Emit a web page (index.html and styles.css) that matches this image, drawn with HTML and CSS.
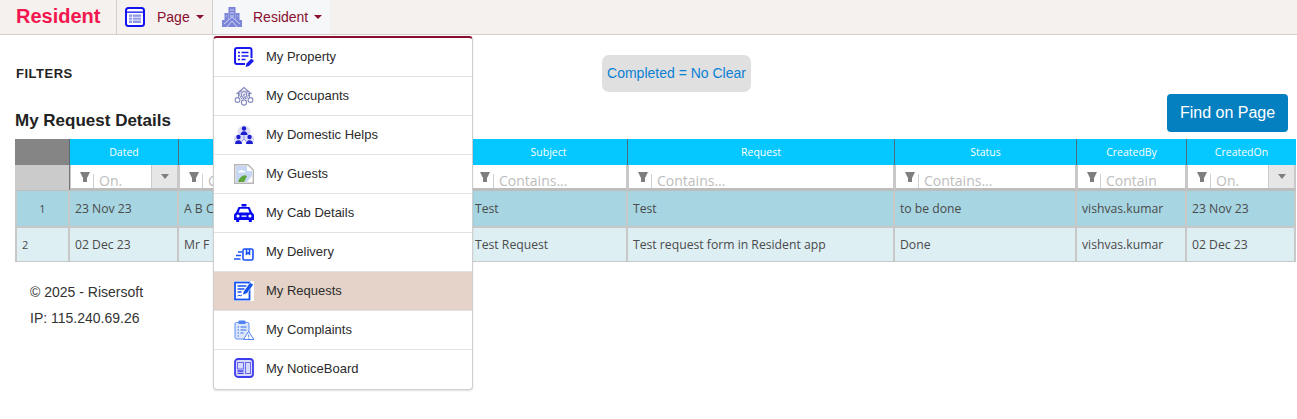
FILE: index.html
```html
<!DOCTYPE html>
<html lang="en">
<head>
<meta charset="utf-8">
<title>My Request Details</title>
<link rel="stylesheet" href="styles.css">
</head>
<body>
<header class="topbar">
  <a class="brand">Resident</a>
  <nav class="nav">
    <div class="nav-item nav-page">
      <svg class="nav-icon" viewBox="0 0 20 20"><rect x="1" y="1" width="18" height="18" rx="2.500" fill="#fff" stroke="#1212f2" stroke-width="2"/><rect x="2" y="4.500" width="16" height="1.300" fill="#1212f2"/><rect x="4" y="7.500" width="12" height="8.500" fill="#8f9ae6"/><path d="M7.500 7.500v8.500M4 10.300h12M4 13.100h12" stroke="#fff" stroke-width=".8"/></svg>
      <span class="nav-label">Page</span><i class="caret"></i>
    </div>
    <div class="nav-item nav-resident">
      <svg class="nav-icon" viewBox="0 0 20 20"><g fill="#7c86d8"><rect x="6.500" y="0" width="7" height="20"/><rect x="2.500" y="6" width="4" height="14"/><rect x="13.500" y="6" width="4" height="14"/><rect x="0" y="13" width="20" height="7"/></g><path d="M8 3h4M8 6h4M8 9h4M4 9h1M15 9h1M2 17l8-7 8 7M5 20l5-6 5 6" stroke="#e8eaf8" fill="none" stroke-width=".8"/></svg>
      <span class="nav-label">Resident</span><i class="caret"></i>
    </div>
  </nav>
</header>

<main class="content">
  <section class="filters">
    <h4 class="filters-title">FILTERS</h4>
    <div class="legend">Completed = No Clear</div>
  </section>
  <section class="title-row">
    <h3 class="page-title">My Request Details</h3>
    <button class="find-btn" type="button">Find on Page</button>
  </section>

  <div class="grid">
    <div class="hd corner"></div>
    <div class="hd">Dated</div>
    <div class="hd"></div>
    <div class="hd">Subject</div>
    <div class="hd">Request</div>
    <div class="hd">Status</div>
    <div class="hd">CreatedBy</div>
    <div class="hd">CreatedOn</div>

    <div class="fl corner2"></div>
    <div class="fl"><i class="funnel"></i><span class="ph">On.</span><span class="drop"><i></i></span></div>
    <div class="fl"><i class="funnel"></i><span class="ph">Contains...</span></div>
    <div class="fl"><i class="funnel"></i><span class="ph">Contains...</span></div>
    <div class="fl"><i class="funnel"></i><span class="ph">Contains...</span></div>
    <div class="fl"><i class="funnel"></i><span class="ph">Contains...</span></div>
    <div class="fl"><i class="funnel"></i><span class="ph clip">Contains...</span></div>
    <div class="fl"><i class="funnel"></i><span class="ph">On.</span><span class="drop"><i></i></span></div>

    <div class="c r1 num center">1</div>
    <div class="c r1">23 Nov 23</div>
    <div class="c r1">A B C</div>
    <div class="c r1">Test</div>
    <div class="c r1">Test</div>
    <div class="c r1">to be done</div>
    <div class="c r1">vishvas.kumar</div>
    <div class="c r1">23 Nov 23</div>

    <div class="c r2 num">2</div>
    <div class="c r2">02 Dec 23</div>
    <div class="c r2">Mr F</div>
    <div class="c r2">Test Request</div>
    <div class="c r2">Test request form in Resident app</div>
    <div class="c r2">Done</div>
    <div class="c r2">vishvas.kumar</div>
    <div class="c r2">02 Dec 23</div>
  </div>

  <footer class="foot">
    <p>© 2025 - Risersoft</p>
    <p>IP: 115.240.69.26</p>
  </footer>
</main>

<ul class="menu">
  <li class="mi"><svg class="mi-icon" viewBox="0 0 20 20"><path d="M17.500 11V3a2 2 0 0 0-2-2H3a2 2 0 0 0-2 2v12a2 2 0 0 0 2 2h8" fill="none" stroke="#1a1af0" stroke-width="2"/><path d="M4 5.500h2M7.500 5.500h7M4 9h2M7.500 9h7M4 12.500h2M7.500 12.500h4" stroke="#1a1af0" stroke-width="1.700"/><path d="M11.500 20l1-3.500 5-5 2.500 2.500-5 5z" fill="#1a1af0"/></svg>My Property</li>
  <li class="mi"><svg class="mi-icon" viewBox="0 0 20 20" fill="none" stroke="#8487bd" stroke-width="1.100"><path d="M2.500 8l7.500-6.500L17.500 8M4.500 7v4M15.500 7v4"/><path d="M7 5h6l2 3.500-2.500 4h-5L5 8.500z" stroke-dasharray="1.500 .6"/><circle cx="10" cy="8.500" r="2.800"/><path d="M8.800 8.500l1 1 1.600-1.800"/><circle cx="3.500" cy="14" r="2.400"/><circle cx="16.500" cy="14" r="2.400"/><circle cx="10" cy="16.500" r="2.600"/></svg>My Occupants</li>
  <li class="mi"><svg class="mi-icon" viewBox="0 0 20 20"><circle cx="10" cy="7" r="6.500" fill="#dcdcfa"/><circle cx="4.500" cy="14.500" r="5" fill="#dcdcfa"/><circle cx="15.500" cy="14.500" r="5" fill="#dcdcfa"/><g fill="#1c1ccf"><circle cx="10" cy="3.500" r="2.200"/><path d="M6.500 10c0-5 7-5 7 0z"/><circle cx="4.500" cy="12" r="2.200"/><path d="M1 19c0-5 7-5 7 0z"/><circle cx="15.500" cy="12" r="2.200"/><path d="M12 19c0-5 7-5 7 0z"/></g><path d="M10 10v4M8 16l2-2 2 2" fill="none" stroke="#7a7ae0" stroke-width=".8"/></svg>My Domestic Helps</li>
  <li class="mi"><svg class="mi-icon" viewBox="0 0 20 20"><path d="M.7.700h13.300l5.300 5.300v13.300H.7z" fill="#fff" stroke="#b5b5b5" stroke-width="1.400"/><path d="M2 2h11v5h5v11H2z" fill="#c6d7f3"/><path d="M4 18c2-6 6-8 9-6l-3 6z" fill="#5fa53a"/><path d="M6 6.500c1.500-1 3-.5 4 .5 1.500 0 2 1.500.5 1.500h-6c-.5-1 .5-2 1.500-2z" fill="#fff"/><path d="M13 18l5-6v6z" fill="#fff"/></svg>My Guests</li>
  <li class="mi"><svg class="mi-icon" viewBox="0 0 20 20" fill="#0808ee"><rect x="7.500" y="1" width="5" height="2.500"/><path d="M4.500 4h11L18 9.500c1 .5 2 1.500 2 3V17h-2.200v2h-3v-2H5.200v2h-3v-2H0v-4.500c0-1.500 1-2.500 2-3zM6 5.800 4.500 9.500h11L14 5.800z" fill-rule="evenodd"/><circle cx="4" cy="13" r="1.600" fill="#fff"/><circle cx="16" cy="13" r="1.600" fill="#fff"/><rect x="7.500" y="12.500" width="5" height="1.300" fill="#fff"/></svg>My Cab Details</li>
  <li class="mi"><svg class="mi-icon" viewBox="0 0 20 20" fill="none" stroke="#1a52f5" stroke-width="1.600"><rect x="9" y="7" width="10" height="11" rx="1.500"/><path d="M12.500 7v5l1.500-1 1.500 1V7M4 10h4M2 13.500h5M0 17h6.500"/></svg>My Delivery</li>
  <li class="mi active"><svg class="mi-icon" viewBox="0 0 20 20"><rect width="20" height="20" fill="#fff"/><rect x="1" y="1.500" width="14.500" height="17" fill="#fff" stroke="#1552f0" stroke-width="1.800"/><path d="M3.500 5h9M3.500 8h7M3.500 11h4" stroke="#1552f0" stroke-width="1.600"/><path d="M3.500 15l1.500-1 1 1 2-1" stroke="#1552f0" fill="none"/><path d="M8.500 14l1-3.500 6.500-9 3.500 2-6.500 9z" fill="#1552f0" stroke="#fff" stroke-width=".6"/></svg>My Requests</li>
  <li class="mi"><svg class="mi-icon" viewBox="0 0 20 20"><rect x="1" y="2.500" width="14" height="16.500" rx="1.500" fill="#dbe6fb" stroke="#5e8df5"/><rect x="4.500" y="0.500" width="7" height="3.500" rx="1" fill="#4f82f3"/><path d="M3.500 7h1.500M6.500 7h6M3.500 10h1.500M6.500 10h6M3.500 13h1.500M6.500 13h3M3.500 16h1.500" stroke="#3b6fe8" stroke-width="1.200"/><path d="M14.500 11.500 20 19.500h-10.500z" fill="#fff" stroke="#4f82f3"/><path d="M14.700 14.500v2.500M14.700 17.800v.8" stroke="#4f82f3"/></svg>My Complaints</li>
  <li class="mi"><svg class="mi-icon" viewBox="0 0 20 20"><rect x="1" y="1" width="18" height="18" rx="3" fill="#d9d9fb" stroke="#3c3cf0" stroke-width="1.800"/><rect x="3.500" y="4.500" width="6" height="6.500" fill="#d9d9fb" stroke="#6a6af0"/><rect x="11.500" y="4.500" width="5" height="11" fill="#d9d9fb" stroke="#6a6af0"/><path d="M3.500 13h6M3.500 15.300h6" stroke="#3c3cf0" stroke-width="1.300"/></svg>My NoticeBoard</li>
</ul>
</body>
</html>
```

FILE: styles.css
```css
* { box-sizing: border-box; }
html, body { margin: 0; padding: 0; }
body {
  font-family: "Liberation Sans", Arial, sans-serif;
  font-size: 14px;
  color: #333;
  background: #fff;
  height: 419px;
  overflow: hidden;
  position: relative;
}

/* top bar */
.topbar {
  display: flex;
  height: 35px;
  background: #f5f1ee;
  border-bottom: 1px solid #d2d0ce;
}
.brand {
  width: 117px;
  padding: 4px 0 0 16px;
  font-size: 20px;
  font-weight: 700;
  line-height: 25px;
  color: #f2174f;
  border-right: 1px solid #d2d0ce;
}
.nav { display: flex; }
.nav-item {
  display: flex;
  align-items: center;
  height: 34px;
  font-size: 14px;
  color: #8a0f2f;
}
.nav-page { width: 96px; padding-left: 8px; border-right: 1px solid #d2d0ce; }
.nav-resident { width: 117px; padding-left: 9px; background: #f6f7f9; }
.nav-icon { width: 20px; height: 20px; flex: none; }
.nav-page .nav-label { margin-left: 12px; }
.nav-resident .nav-label { margin-left: 11px; }
.caret {
  margin-left: 6px;
  width: 0;
  height: 0;
  border-left: 4px solid transparent;
  border-right: 4px solid transparent;
  border-top: 4px solid #8a0f2f;
}

/* content */
.content { padding: 0 0 0 15px; }
.filters {
  display: flex;
  align-items: center;
  height: 37px;
  margin-top: 20px;
}
.filters-title {
  margin: 0 0 0 1px;
  width: 586px;
  font-size: 13px;
  font-weight: 700;
  letter-spacing: .5px;
  color: #222;
}
.legend {
  width: 149px;
  height: 37px;
  line-height: 37px;
  text-align: center;
  font-size: 14px;
  color: #0a7fd6;
  background: #e0e0e0;
  border-radius: 7px;
}
.title-row {
  display: flex;
  justify-content: space-between;
  align-items: flex-end;
  height: 40px;
  padding-right: 9px;
  margin-bottom: 7px;
}
.page-title {
  margin: 0 0 1px;
  font-size: 17px;
  font-weight: 700;
  line-height: 20px;
  color: #222;
}
.find-btn {
  width: 121px;
  height: 38px;
  padding: 0;
  border: 0;
  border-radius: 4px;
  background: #0480c0;
  color: #fff;
  font: 16px "Liberation Sans", Arial, sans-serif;
}

/* grid */
.grid {
  display: grid;
  grid-template-columns: 55px 109px 291px 158px 267px 182px 110px 109px;
  grid-template-rows: 26px 25px 37px 35px;
  width: 1281px;
  font-family: "Open Sans", sans-serif;
  font-size: 12.2px;
}
.hd {
  display: flex;
  align-items: center;
  justify-content: center;
  font-size: 10.5px;
  color: #fff;
  background: #04c8ff;
  border-right: 1px solid #4a6e80;
}
.hd:nth-child(8) { border-right: 0; }
.corner { background: #858585; border-right: 1px solid #5c6a70; }
.fl {
  display: flex;
  align-items: center;
  position: relative;
  overflow: hidden;
  padding: 9px 0 0 9px;
  background: #fff;
  border-right: 2px solid #c8c8c8;
  border-bottom: 2px solid #bdbdbd;
  border-left: 1px solid #c8c8c8;
}
.corner2 { padding: 0; border-left: 0; border-bottom: 0; border-right: 1px solid #777; background: #cbcbcb; }
.funnel {
  flex: none;
  width: 10px;
  height: 10px;
  margin-top: -8px;
  background: #7e7e7e;
  clip-path: polygon(0 0, 100% 0, 70% 60%, 70% 100%, 30% 100%, 30% 60%);
}
.ph {
  margin-left: 3px;
  padding-left: 5px;
  font-size: 14px;
  line-height: 14px;
  color: #bdbdbd;
  border-left: 1px solid #d0d0d0;
  white-space: nowrap;
}
.clip { width: 56px; overflow: hidden; }
.drop {
  position: absolute;
  top: 0;
  right: 0;
  bottom: 0;
  width: 26px;
  display: flex;
  align-items: center;
  justify-content: center;
  background: #e6e6e6;
  border-left: 1px solid #ccc;
}
.drop i {
  width: 0;
  height: 0;
  border-left: 4.5px solid transparent;
  border-right: 4.5px solid transparent;
  border-top: 5px solid #7e7e7e;
}
.c {
  display: flex;
  align-items: center;
  padding-left: 5px;
  color: #4a4a4a;
  white-space: nowrap;
  overflow: hidden;
  border-right: 2px solid #c8c8c8;
}
.r1 { background: #a7d6e2; border-bottom: 1px solid #c8c8c8; border-top: 1px solid #bdbdbd; }
.r2 { background: #deeff4; border-top: 1px solid #c8c8c8; border-bottom: 1px solid #c8c8c8; }
.num { border-left: 2px solid #c8c8c8; font-size: 11px; }
.center { justify-content: center; padding-left: 0; }

/* footer */
.foot { padding: 20px 0 0 15px; }
.foot p { margin: 0 0 6px; line-height: 20px; font-size: 14px; color: #333; }

/* dropdown */
.menu {
  position: absolute;
  top: 36px;
  left: 213px;
  width: 260px;
  height: 354px;
  margin: 0;
  padding: 0;
  list-style: none;
  background: #fff;
  border: 1px solid #cfcfcf;
  border-top: 2px solid #8a0f2f;
  border-radius: 4px;
  box-shadow: 0 1px 2px rgba(0,0,0,.12);
}
.mi {
  display: flex;
  align-items: center;
  height: 39px;
  padding: 0 0 1px 20px;
  font-size: 13px;
  color: #2b2b2b;
  border-bottom: 1px solid #e2e2e2;
}
.mi:last-child { border-bottom: 0; padding-bottom: 3px; }
.mi.active { background: #e5d3c9; }
.mi-icon { width: 20px; height: 20px; flex: none; margin-right: 12px; }
```
